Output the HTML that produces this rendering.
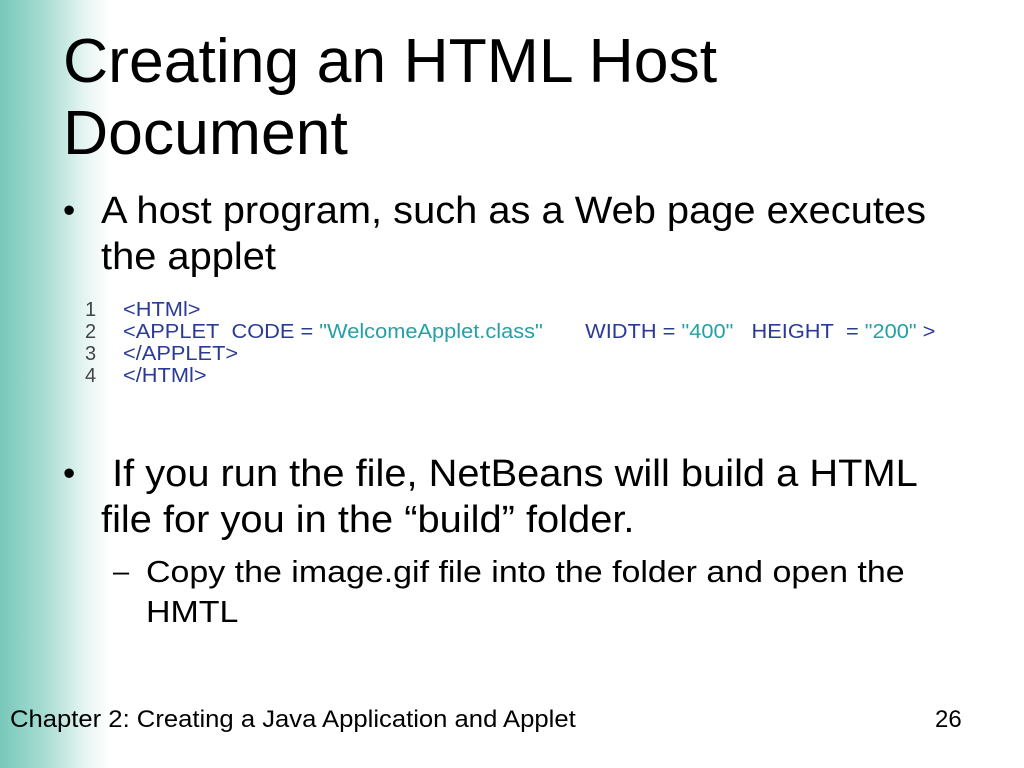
<!DOCTYPE html>
<html><head><style>
body{margin:0;width:1024px;height:768px;position:relative;overflow:hidden;background:linear-gradient(to right,#78c8bb 0px,#a8dcd2 45px,#e6f5f2 85px,#fff 110px);font-family:"Liberation Sans",sans-serif;color:#000}
.a{position:absolute;white-space:nowrap;transform-origin:0 0}
.t{font-size:62px;line-height:72px;left:63px;top:26px;transform:scaleX(1.008)}
.b{font-size:38px;line-height:46px}
.x{transform:scaleX(1.048)}
.s{font-size:31px;line-height:40px}
.code{font-size:20px;line-height:22px;color:#2a3a96}
.n{color:#444}
.q{color:#26a0a4}
</style></head><body>
<div class="a t">Creating an HTML Host<br>Document</div>
<div class="a b" style="left:63px;top:188px;font-size:35px">•</div>
<div class="a b x" style="left:101px;top:188px">A host program, such as a Web page executes<br>the applet</div>
<div class="a code n" style="left:85px;top:299px">1<br>2<br>3<br>4</div>
<div class="a code" style="left:123px;top:299px;transform:scaleX(1.09)">&lt;HTMl&gt;<br>&lt;APPLET&nbsp;&nbsp;CODE = <span class="q">"WelcomeApplet.class"</span>&nbsp;&nbsp;&nbsp;&nbsp;&nbsp;&nbsp;&nbsp;WIDTH = <span class="q">"400"</span>&nbsp;&nbsp;&nbsp;HEIGHT&nbsp;&nbsp;= <span class="q">"200"</span> &gt;<br>&lt;/APPLET&gt;<br>&lt;/HTMl&gt;</div>
<div class="a b" style="left:63px;top:451px;font-size:35px">•</div>
<div class="a b x" style="left:101px;top:451px">&nbsp;If you run the file, NetBeans will build a HTML<br>file for you in the “build” folder.</div>
<div class="a s" style="left:113px;top:552px;font-size:29px">–</div>
<div class="a s" style="left:146px;top:552px;transform:scaleX(1.095)">Copy the image.gif file into the folder and open the<br>HMTL</div>
<div class="a" style="left:10px;top:706px;font-size:24px;transform:scaleX(1.068)">Chapter 2: Creating a Java Application and Applet</div>
<div class="a" style="left:935px;top:706px;font-size:24px">26</div>
</body></html>
